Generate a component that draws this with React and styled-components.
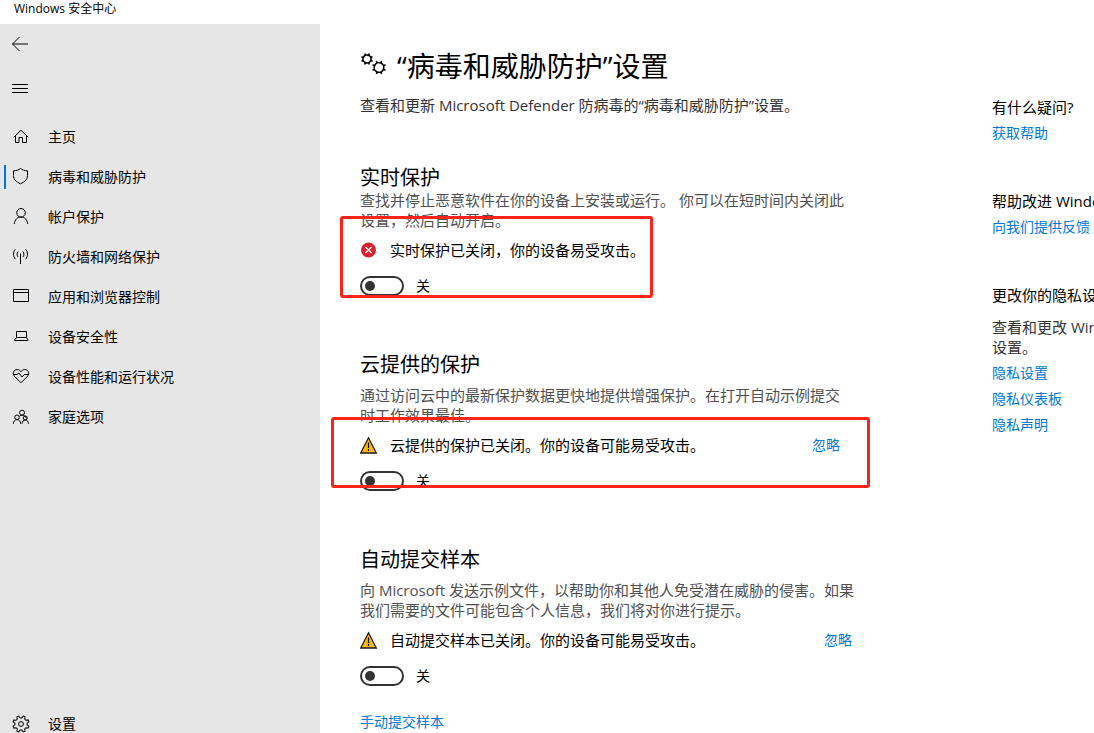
import React from "react";
import styled, { createGlobalStyle } from "styled-components";

const GlobalStyle = createGlobalStyle`
  * {
    box-sizing: border-box;
  }

  body {
    margin: 0;
    background: #ffffff;
    color: #000000;
    font-family: "Open Sans", "Noto Sans CJK SC", sans-serif;
    font-size: 15px;
    line-height: 20px;
  }

  h1, h2, h3, p {
    margin: 0;
    font-size: 15px;
    font-weight: 400;
  }
`;

const Window = styled.div`
  display: flex;
  flex-direction: column;
  height: 100vh;
  overflow: hidden;
`;

const TitleBar = styled.header`
  flex: none;
  height: 24px;
  padding-left: 14px;
  font-size: 12px;
  line-height: 18px;
`;

const Body = styled.div`
  display: flex;
  flex: 1;
  min-height: 0;
`;

const Sidebar = styled.nav`
  display: flex;
  flex-direction: column;
  flex: 0 0 320px;
  background: #e6e6e6;
`;

const IconButton = styled.button`
  display: flex;
  align-items: center;
  width: 48px;
  height: ${(props) => props.$height}px;
  padding: 0 0 0 8px;
  border: 0;
  background: transparent;
`;

const NavList = styled.div`
  display: flex;
  flex-direction: column;
  flex: 1;
  padding-top: 5px;
`;

const NavItem = styled.a`
  display: flex;
  align-items: center;
  gap: 15px;
  height: 40px;
  padding-left: 4px;
  color: #000000;
  font-size: 14px;
  text-decoration: none;

  &:last-child {
    height: 18px;
    margin-top: auto;
  }
`;

const Marker = styled.span`
  width: 2px;
  height: 24px;
  margin-right: -12px;
  background: ${(props) => (props.$active ? "#0078d7" : "transparent")};
`;

const Icon = styled.svg`
  flex: none;
  fill: none;
  stroke: #000000;
  stroke-width: 1;
`;

const Main = styled.main`
  display: flex;
  flex: 1;
  gap: 138px;
  min-width: 0;
  padding: 22px 0 0 40px;
  overflow: hidden;
`;

const Content = styled.div`
  flex: 0 0 494px;
`;

const PageTitle = styled.h1`
  display: flex;
  align-items: center;
  gap: 10px;
  font-size: 28px;
  line-height: 40px;
`;

const Lead = styled.p`
  margin: 9px 0 51px;
  color: #333333;
`;

const Section = styled.section`
  position: relative;
  max-width: ${(props) => props.$width}px;
  margin-bottom: 57px;
`;

const SectionTitle = styled.h2`
  margin-bottom: ${(props) => (props.$tight ? 0 : 8)}px;
  font-size: 20px;
  line-height: 24px;
`;

const Description = styled.p`
  margin-right: -4px;
  color: #505050;
`;

const Status = styled.div`
  display: flex;
  align-items: center;
  gap: 12px;
  margin: 10px 0 16px;
`;

const Link = styled.a`
  color: #0078d7;
  font-size: 14px;
  text-decoration: none;
`;

const DismissLink = styled(Link)`
  margin-left: auto;
`;

const SubmitLink = styled(Link)`
  display: block;
  margin-top: 26px;
`;

const ToggleRow = styled.label`
  display: flex;
  align-items: center;
  gap: 12px;
  width: fit-content;
  font-size: 14px;
`;

const Toggle = styled.input`
  display: flex;
  align-items: center;
  appearance: none;
  width: 44px;
  height: 20px;
  margin: 0;
  padding-left: 3px;
  border: 2px solid #333333;
  border-radius: 10px;
  background: #ffffff;

  &::before {
    content: "";
    width: 10px;
    height: 10px;
    border-radius: 50%;
    background: #333333;
  }

  &:checked {
    justify-content: flex-end;
    padding: 0 3px 0 0;
    border-color: #0078d7;
    background: #0078d7;
  }

  &:checked::before {
    background: #ffffff;
  }
`;

/* red frame that calls out a status, drawn over the section */
const Highlight = styled.div`
  position: absolute;
  top: ${(props) => props.$top}px;
  right: ${(props) => props.$right}px;
  bottom: ${(props) => props.$bottom}px;
  left: ${(props) => props.$left}px;
  border: 3px solid #fc2418;
  border-radius: 3px;
  pointer-events: none;
`;

const Aside = styled.aside`
  display: flex;
  flex-direction: column;
  flex: 0 0 250px;
  gap: 48px;
  padding-top: 51px;
`;

const HelpBlock = styled.div`
  display: flex;
  flex-direction: column;
  align-items: flex-start;
  gap: 6px;
`;

const HelpText = styled.p`
  margin-top: 6px;
  color: #333333;
`;

const shapes = {
  home: (
    <>
      <path d="M4.8 12.2 12 5.2l7.2 7" />
      <path d="M6.5 10.8v6.7H10v-5h3.5v5h4v-6.7" />
    </>
  ),
  shield: (
    <path d="M11.5 3.5C9.6 5 7.2 5.8 4.5 5.8v4.7c0 4.3 3.2 6.5 7 8.3 3.8-1.8 7-4 7-8.3V5.8c-2.7 0-5.1-.8-7-2.3z" />
  ),
  person: (
    <>
      <circle cx="12" cy="7.8" r="4.3" />
      <path d="M5.3 19c.3-4.2 3-6.9 6.7-6.9s6.4 2.7 6.7 6.9" />
    </>
  ),
  network: (
    <>
      <path d="M11.5 8.5V19" />
      <path d="M9 6.5c-1.2 1.5-1.2 3.9 0 5.4M14 6.5c1.2 1.5 1.2 3.9 0 5.4" />
      <path d="M6.3 4.3c-2.4 3-2.4 6.8 0 9.8M16.7 4.3c2.4 3 2.4 6.8 0 9.8" />
    </>
  ),
  browser: <path d="M4.5 4.5h15v12h-15zM4.5 7.5h15" />,
  laptop: (
    <path d="M7.5 12.5v-6h10v6zM7.5 12.5l-2 2.5c-.2.3 0 .5.3.5h12.9c.3 0 .5-.2.3-.5l-1.5-2.5" />
  ),
  heart: (
    <>
      <path d="M12 17.8 5.5 11.3C2.8 8.3 5 4.5 8.2 4.5c1.6 0 2.9.8 3.8 2.3.9-1.5 2.2-2.3 3.8-2.3 3.2 0 5.4 3.8 2.7 6.8z" />
      <path d="M5 9.5h3L10 8l3 4 2.500-2.500H19" />
    </>
  ),
  family: (
    <>
      <circle cx="13" cy="7.7" r="2.5" />
      <circle cx="8" cy="12.3" r="2.3" />
      <circle cx="16.3" cy="13" r="2" />
      <path d="M4.3 18.8c.2-2.600 1.600-4.200 3.700-4.200s3.500 1.600 3.700 4.200M13 18.800c.2-2.300 1.400-3.800 3.300-3.800s3 1.500 3.200 3.800M10.500 11.500c.5-.9 1.400-1.300 2.500-1.300 2.300 0 3.900 1.300 4.400 3.300" />
    </>
  ),
};

const teeth = [0, 45, 90, 135, 180, 225, 270, 315];

const Gear = ({ x, y, r, tooth }) => (
  <g transform={`translate(${x} ${y}) rotate(22.5)`} strokeWidth="1.6">
    <circle r={r} />
    {teeth.map((angle) => (
      <path key={angle} d={`M0 ${-r}V${-r - tooth}`} transform={`rotate(${angle})`} />
    ))}
  </g>
);

const SettingsIcon = () => (
  <Icon width="24" height="24" viewBox="0 0 24 24" aria-hidden="true">
    <g transform="translate(12 12) rotate(22.5)">
      <path d="M-1-7.500h2l.5 2.200 1.600.7L5-5.800l1.500 1.500-1.200 1.900.7 1.600L8.200-.3v2l-2.200.5-.7 1.600 1.200 1.900L5 7.200 3.100 6l-1.600.7L1 8.900h-2l-.5-2.200L-3.100 6-5 7.200l-1.500-1.500 1.200-1.900L-6 2.200l-2.200-.5v-2L-6-.8l.7-1.600-1.200-1.900L-5-5.800l1.900 1.200 1.600-.7z" transform="translate(0 -.7)" />
    </g>
    <circle cx="12" cy="12" r="2.4" />
  </Icon>
);

const ErrorIcon = () => (
  <svg width="18" height="18" viewBox="0 0 18 18" aria-hidden="true">
    <circle cx="8.5" cy="9" r="7.5" fill="#da1f2e" />
    <path d="M5.5 6l6 6M11.5 6l-6 6" stroke="#ffffff" strokeWidth="1.3" />
  </svg>
);

const WarningIcon = () => (
  <svg width="18" height="18" viewBox="0 0 18 18" aria-hidden="true">
    <path d="M8.5 1.8 16.3 17H.7z" fill="#ffb900" stroke="#1a1a1a" strokeWidth="1.3" />
    <path d="M8.5 6.5V12M8.5 13v2" stroke="#000000" strokeWidth="1.2" />
  </svg>
);

const navItems = [
  { icon: "home", label: "主页" },
  { icon: "shield", label: "病毒和威胁防护", active: true },
  { icon: "person", label: "帐户保护" },
  { icon: "network", label: "防火墙和网络保护" },
  { icon: "browser", label: "应用和浏览器控制" },
  { icon: "laptop", label: "设备安全性" },
  { icon: "heart", label: "设备性能和运行状况" },
  { icon: "family", label: "家庭选项" },
];

const ProtectionToggle = ({ name }) => (
  <ToggleRow>
    <Toggle type="checkbox" role="switch" aria-label={name} />
    <span>关</span>
  </ToggleRow>
);

const App = () => {
  return (
    <Window lang="zh-CN">
      <GlobalStyle />
      <TitleBar>Windows 安全中心</TitleBar>
      <Body>
        <Sidebar>
          <IconButton type="button" aria-label="返回" $height={40}>
            <Icon width="24" height="24" viewBox="0 0 24 24">
              <path d="M4.5 12H20M11.5 5l-7 7 7 7" />
            </Icon>
          </IconButton>
          <IconButton type="button" aria-label="菜单" $height={48}>
            <Icon width="24" height="24" viewBox="0 0 24 24">
              <path d="M4 8.5h16M4 12.5h16M4 16.5h16" />
            </Icon>
          </IconButton>
          <NavList>
            {navItems.map((item) => (
              <NavItem key={item.label} href="#" aria-current={item.active ? "page" : undefined}>
                <Marker $active={item.active} />
                <Icon width="24" height="24" viewBox="0 0 24 24" aria-hidden="true">
                  {shapes[item.icon]}
                </Icon>
                <span>{item.label}</span>
              </NavItem>
            ))}
            <NavItem href="#">
              <Marker />
              <SettingsIcon />
              <span>设置</span>
            </NavItem>
          </NavList>
        </Sidebar>
        <Main>
          <Content>
            <PageTitle>
              <Icon width="27" height="26" viewBox="0 0 27 26" aria-hidden="true">
                <Gear x={7} y={6} r={4} tooth={2} />
                <Gear x={19} y={14.5} r={4.8} tooth={2.2} />
              </Icon>
              <span>“病毒和威胁防护”设置</span>
            </PageTitle>
            <Lead>查看和更新 Microsoft Defender 防病毒的“病毒和威胁防护”设置。</Lead>

            <Section $width={490}>
              <SectionTitle $tight>实时保护</SectionTitle>
              <Description>
                查找并停止恶意软件在你的设备上安装或运行。 你可以在短时间内关闭此设置，然后自动开启。
              </Description>
              <Status>
                <ErrorIcon />
                <span>实时保护已关闭，你的设备易受攻击。</span>
              </Status>
              <ProtectionToggle name="实时保护" />
              <Highlight $top={50} $right={197} $bottom={-2} $left={-20} />
            </Section>

            <Section $width={480}>
              <SectionTitle>云提供的保护</SectionTitle>
              <Description>
                通过访问云中的最新保护数据更快地提供增强保护。在打开自动示例提交时工作效果最佳。
              </Description>
              <Status>
                <WarningIcon />
                <span>云提供的保护已关闭。你的设备可能易受攻击。</span>
                <DismissLink href="#">忽略</DismissLink>
              </Status>
              <ProtectionToggle name="云提供的保护" />
              <Highlight $top={64} $right={-30} $bottom={3} $left={-29} />
            </Section>

            <Section $width={492}>
              <SectionTitle>自动提交样本</SectionTitle>
              <Description>
                向 Microsoft 发送示例文件，以帮助你和其他人免受潜在威胁的侵害。如果我们需要的文件可能包含个人信息，我们将对你进行提示。
              </Description>
              <Status>
                <WarningIcon />
                <span>自动提交样本已关闭。你的设备可能易受攻击。</span>
                <DismissLink href="#">忽略</DismissLink>
              </Status>
              <ProtectionToggle name="自动提交样本" />
              <SubmitLink href="#">手动提交样本</SubmitLink>
            </Section>
          </Content>

          <Aside>
            <HelpBlock>
              <h3>有什么疑问?</h3>
              <Link href="#">获取帮助</Link>
            </HelpBlock>
            <HelpBlock>
              <h3>帮助改进 Windows 安全中心</h3>
              <Link href="#">向我们提供反馈</Link>
            </HelpBlock>
            <HelpBlock>
              <h3>更改你的隐私设置</h3>
              <HelpText>查看和更改 Windows 10 设备的隐私设置。</HelpText>
              <Link href="#">隐私设置</Link>
              <Link href="#">隐私仪表板</Link>
              <Link href="#">隐私声明</Link>
            </HelpBlock>
          </Aside>
        </Main>
      </Body>
    </Window>
  );
};

export default App;
